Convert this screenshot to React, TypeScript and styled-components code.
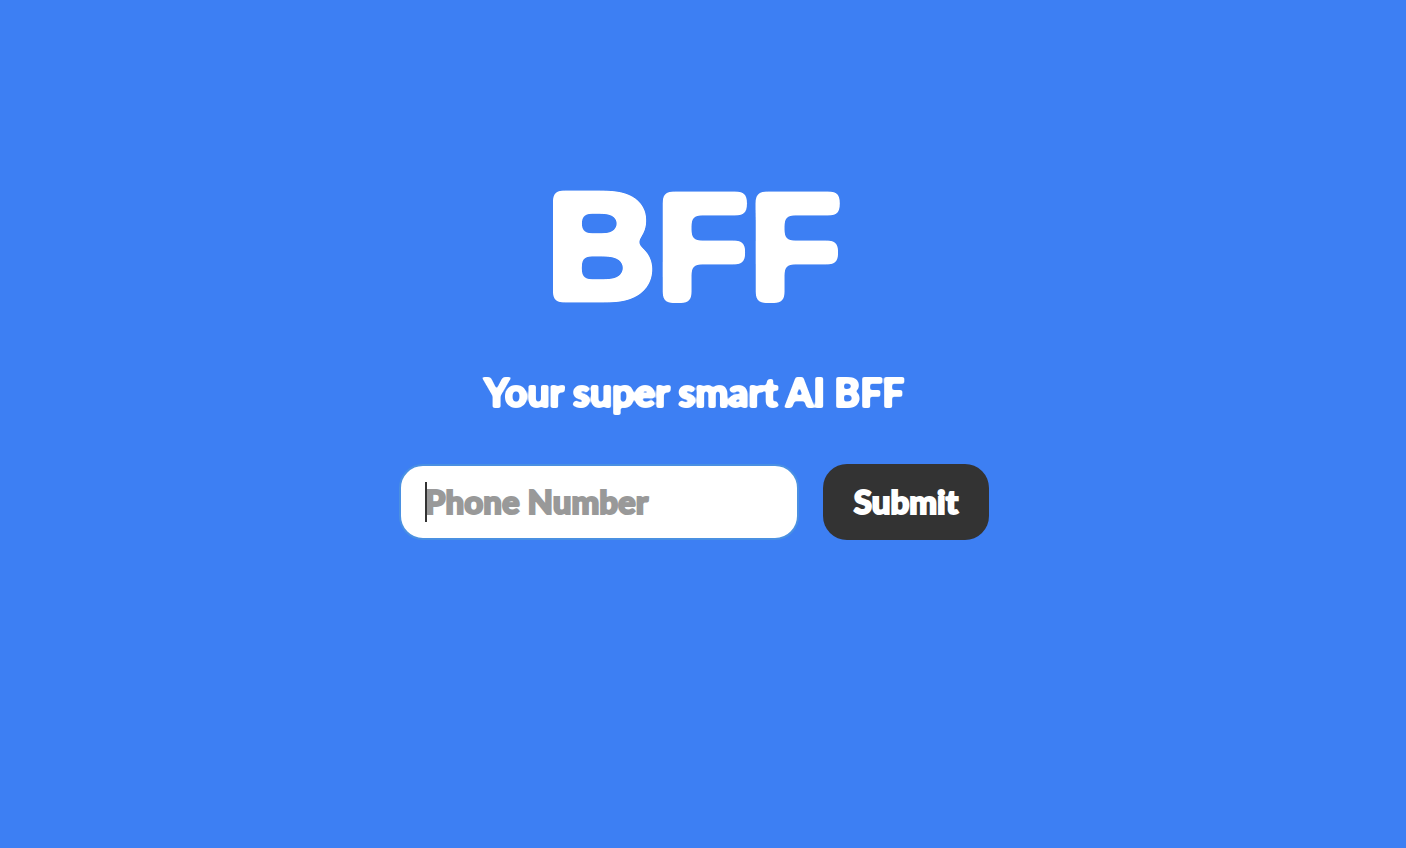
import React from "react";
import styled, { createGlobalStyle } from "styled-components";

const GlobalStyle = createGlobalStyle`
  *, *::before, *::after { box-sizing: border-box; }
  body {
    margin: 0;
    background: #3d7ff3;
    color: #fff;
    font-family: Lato, "Liberation Sans", sans-serif;
    font-weight: 900;
  }
`;

const Page = styled.main`
  min-height: 100vh;
  padding: 168px 18px 48px 0;
  display: flex;
  flex-direction: column;
  align-items: center;
  text-align: center;
`;

const FilterDefs = styled.svg`
  position: absolute;
  width: 0;
  height: 0;
`;

const Title = styled.h1`
  margin: 0 0 44px;
  font-family: "Liberation Sans", Arial, sans-serif;
  font-size: 152px;
  font-weight: 700;
  line-height: 156px;
  -webkit-text-stroke: 6px #fff;
  filter: url(#round-large);
`;

const Tagline = styled.p`
  margin: 0 0 48px;
  font-size: 39px;
  line-height: 48px;
  -webkit-text-stroke: 2px #fff;
  filter: url(#round-small);
`;

const SignupForm = styled.form`
  display: flex;
  flex-wrap: wrap;
  justify-content: center;
  gap: 24px;
`;

const Field = styled.label`
  position: relative;
  width: 400px;
  max-width: 100%;
`;

const PhoneInput = styled.input`
  display: block;
  width: 100%;
  height: 76px;
  padding: 0 24px 2px;
  border: 2px solid #4a90e2;
  border-radius: 24px;
  outline: none;
  background: #fff;
  color: #333;
  caret-color: transparent;
  font: inherit;
  font-size: 33px;

  &::placeholder {
    color: #999;
    opacity: 1;
    -webkit-text-stroke: 2px #999;
  }
`;

const Caret = styled.span`
  position: absolute;
  top: 18px;
  left: 26px;
  width: 2px;
  height: 40px;
  background: #333;
`;

const SubmitButton = styled.button`
  height: 76px;
  padding: 0 31px 2px;
  border: 0;
  border-radius: 24px;
  background: #333;
  color: #fff;
  font: inherit;
  font-size: 33px;
  -webkit-text-stroke: 2px #fff;
  cursor: pointer;
`;

/* Blurs the text, then sharpens its alpha again, which leaves soft corners. */
function RoundFilter({ id, blur, gain, cut }: { id: string; blur: number; gain: number; cut: number }) {
  return (
    <filter id={id} x="-5%" y="-5%" width="110%" height="110%" colorInterpolationFilters="sRGB">
      <feGaussianBlur stdDeviation={blur} />
      <feComponentTransfer>
        <feFuncR type="linear" slope="0" intercept="1" />
        <feFuncG type="linear" slope="0" intercept="1" />
        <feFuncB type="linear" slope="0" intercept="1" />
        <feFuncA type="linear" slope={gain} intercept={cut} />
      </feComponentTransfer>
    </filter>
  );
}

export default function App() {
  return (
    <Page>
      <GlobalStyle />
      <FilterDefs aria-hidden="true">
        <RoundFilter id="round-large" blur={5} gain={14} cut={-6} />
        <RoundFilter id="round-small" blur={1} gain={3} cut={-1} />
      </FilterDefs>
      <Title>BFF</Title>
      <Tagline>Your super smart AI BFF</Tagline>
      <SignupForm onSubmit={(e) => e.preventDefault()}>
        <Field>
          <PhoneInput type="tel" name="phone" placeholder="Phone Number" aria-label="Phone Number" autoComplete="tel" />
          <Caret aria-hidden="true" />
        </Field>
        <SubmitButton type="submit">Submit</SubmitButton>
      </SignupForm>
    </Page>
  );
}
